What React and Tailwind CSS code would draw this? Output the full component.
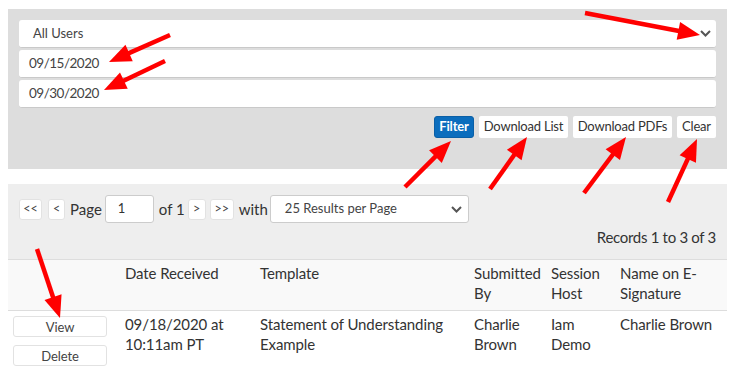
import React from "react";

const font = { fontFamily: "Lato, 'Open Sans', sans-serif" };

function Arrow({ s, t }) {
  const [x1, y1] = s;
  const [x2, y2] = t;
  const dx = x2 - x1;
  const dy = y2 - y1;
  const len = Math.hypot(dx, dy);
  const ux = dx / len;
  const uy = dy / len;
  const L = 22;
  const W = 9;
  const bx = x2 - ux * L;
  const by = y2 - uy * L;
  const nx = -uy;
  const ny = ux;
  const pts = `${x2},${y2} ${bx + nx * W},${by + ny * W} ${bx - nx * W},${by - ny * W}`;
  return (
    <g>
      <line x1={x1} y1={y1} x2={bx + ux * 2} y2={by + uy * 2} stroke="#ff0000" strokeWidth="4.5" />
      <polygon points={pts} fill="#ff0000" />
    </g>
  );
}

function Chevron() {
  return (
    <svg width="11" height="7" viewBox="0 0 11 7" className="shrink-0">
      <path d="M1 1 L5.5 5.5 L10 1" stroke="#555" strokeWidth="2" fill="none" />
    </svg>
  );
}

function SmallBtn({ children, className = "" }) {
  return (
    <div
      className={`h-[21px] flex items-center justify-center bg-white rounded-[3px] border border-[#e2e2e2] text-[12.5px] text-[#444] ${className}`}
    >
      {children}
    </div>
  );
}

export default function App() {
  return (
    <div className="relative w-[739px] h-[378px] bg-white overflow-hidden text-[#333]" style={font}>
      <div className="pt-[9px] pl-[8px] w-[727px]">
        {/* Filter panel */}
        <div className="bg-[#dddddd] pt-[11px] px-[11px] pb-[31px]">
          <div className="h-[28px] bg-white rounded-[3px] border-b border-[#c9c9c9] flex items-center justify-between pl-[14px] pr-[5px] text-[13px] text-[#444]">
            <span>All Users</span>
            <Chevron />
          </div>
          <div className="mt-[2px] h-[28px] bg-white rounded-[3px] border-b border-[#c9c9c9] flex items-center pl-[10px] text-[13.5px] tracking-[-0.5px] text-[#444]">
            09/15/2020
          </div>
          <div className="mt-[2px] h-[28px] bg-white rounded-[3px] border-b border-[#c9c9c9] flex items-center pl-[10px] text-[13.5px] tracking-[-0.5px] text-[#444]">
            09/30/2020
          </div>
          <div className="mt-[8px] flex justify-end gap-[5px] text-[13px] tracking-[-0.2px]">
            <div className="w-[40px] h-[22px] flex items-center justify-center rounded-[3px] bg-[#0b6dbd] border border-[#0a5fa6] text-white font-bold">
              Filter
            </div>
            <div className="w-[89px] h-[22px] flex items-center justify-center rounded-[2px] bg-white text-[#333]">Download List</div>
            <div className="w-[99px] h-[22px] flex items-center justify-center rounded-[2px] bg-white text-[#333]">Download PDFs</div>
            <div className="w-[39px] h-[22px] flex items-center justify-center rounded-[2px] bg-white text-[#333]">Clear</div>
          </div>
        </div>

        {/* Pagination panel */}
        <div className="mt-[15px] bg-[#eeeeee] pt-[11px] px-[11px] h-[75px]">
          <div className="flex items-center text-[15px] text-[#333]">
            <SmallBtn className="w-[23px]">&lt;&lt;</SmallBtn>
            <SmallBtn className="w-[17px] ml-[6px]">&lt;</SmallBtn>
            <span className="ml-[5px]">Page</span>
            <div className="ml-[3px] w-[49px] h-[28px] bg-white border border-[#cccccc] rounded-[3px] flex items-center pl-[12px] text-[13px]">
              1
            </div>
            <span className="ml-[5px]">of 1</span>
            <SmallBtn className="w-[18px] ml-[3px]">&gt;</SmallBtn>
            <SmallBtn className="w-[24px] ml-[4px]">&gt;&gt;</SmallBtn>
            <span className="ml-[5px]">with</span>
            <div className="ml-[2px] w-[199px] h-[28px] bg-white border border-[#cccccc] rounded-[3px] flex items-center justify-between pl-[14px] pr-[6px] text-[13px] text-[#444]">
              <span>25 Results per Page</span>
              <Chevron />
            </div>
          </div>
          <div className="mt-[4px] text-right text-[15px] leading-[20px] tracking-[-0.3px] text-[#333]">Records 1 to 3 of 3</div>
        </div>

        {/* Table */}
        <div className="grid grid-cols-[109px_135px_214px_77px_69px_115px] text-[15px] leading-[20px] tracking-[-0.1px] text-[#333]">
          <div className="bg-[#f9f9f9] border-y border-[#dddddd] h-[52px]"></div>
          <div className="bg-[#f9f9f9] border-y border-[#dddddd] h-[52px] pl-[8px] pt-[3px]">Date Received</div>
          <div className="bg-[#f9f9f9] border-y border-[#dddddd] h-[52px] pl-[8px] pt-[3px]">Template</div>
          <div className="bg-[#f9f9f9] border-y border-[#dddddd] h-[52px] pl-[8px] pt-[3px]">
            Submitted<br />By
          </div>
          <div className="bg-[#f9f9f9] border-y border-[#dddddd] h-[52px] pl-[8px] pt-[3px]">
            Session<br />Host
          </div>
          <div className="bg-[#f9f9f9] border-y border-[#dddddd] h-[52px] pl-[8px] pt-[3px]">
            Name on E-<br />Signature
          </div>

          <div className="pl-[5px] pr-[10px] pt-[5px] flex flex-col gap-[8px]">
            <SmallBtn className="w-[94px] text-[13px]">View</SmallBtn>
            <SmallBtn className="w-[94px] text-[13px]">Delete</SmallBtn>
          </div>
          <div className="pl-[8px] pt-[3px]">
            09/18/2020 at<br />10:11am PT
          </div>
          <div className="pl-[8px] pt-[3px]">
            Statement of Understanding<br />Example
          </div>
          <div className="pl-[8px] pt-[3px]">
            Charlie<br />Brown
          </div>
          <div className="pl-[8px] pt-[3px]">
            Iam<br />Demo
          </div>
          <div className="pl-[8px] pt-[3px]">Charlie Brown</div>
        </div>
      </div>

      <svg className="absolute inset-0 pointer-events-none" width="739" height="378">
        <Arrow s={[170, 35]} t={[109, 62]} />
        <Arrow s={[165, 61]} t={[104, 90]} />
        <Arrow s={[585, 13]} t={[700, 35]} />
        <Arrow s={[405, 187]} t={[451, 141]} />
        <Arrow s={[490, 189]} t={[527, 137]} />
        <Arrow s={[584, 193]} t={[626, 137]} />
        <Arrow s={[668, 202]} t={[697, 139]} />
        <Arrow s={[37, 249]} t={[60, 318]} />
      </svg>
    </div>
  );
}
